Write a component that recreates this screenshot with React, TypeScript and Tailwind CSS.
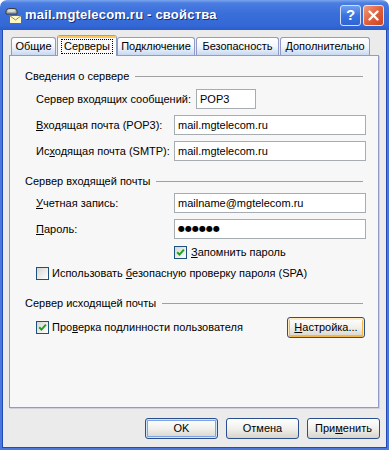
import React from 'react';

const Check = ({ checked = false }: { checked?: boolean }) => (
  <span className="flex h-[13px] w-[13px] shrink-0 items-center justify-center border border-[#1c5180] bg-linear-to-br from-[#d6d6d0] to-white">
    {checked && (
      <svg width="9" height="9" viewBox="0 0 9 9">
        <path d="M1.2 4.2 L3.5 6.6 L7.9 1.6" stroke="#21a121" strokeWidth="2" fill="none" />
      </svg>
    )}
  </span>
);

const Field = ({ children, className = '' }: { children: React.ReactNode; className?: string }) => (
  <div className={`flex h-[20px] items-center border border-[#a5acb2] bg-white px-[3px] ${className}`}>{children}</div>
);

const Group = ({ title, className = '' }: { title: string; className?: string }) => (
  <div className={`flex h-[14px] items-center ${className}`}>
    <span>{title}</span>
    <div className="ml-[6px] mr-[3px] h-px flex-1 bg-[#a0a0a0]" />
  </div>
);

const Btn = ({ children, kind = 'normal', className = '' }: { children: React.ReactNode; kind?: 'normal' | 'default' | 'hot'; className?: string }) => {
  const ring =
    kind === 'default'
      ? 'shadow-[inset_0_0_0_1px_#cee7ff,inset_0_0_0_2px_#7ea4e6]'
      : kind === 'hot'
        ? 'shadow-[inset_0_1px_0_1px_#ffeac0,inset_0_0_0_2px_#f3b64a]'
        : '';
  return (
    <div
      className={`flex h-[21px] items-center justify-center rounded-[3px] border border-[#2b4f8c] bg-linear-to-b from-white via-[#f1f0ec] to-[#d8d4cb] ${ring} ${className}`}
    >
      {children}
    </div>
  );
};

const U = ({ children }: { children: React.ReactNode }) => <span className="underline underline-offset-[1px]">{children}</span>;

const MailIcon = () => (
  <svg width="17" height="17" viewBox="0 0 17 17">
    <path d="M1 4 Q1 1.5 5 1.5 L9 1.5 Q12 1.5 12 4 L12 7 L1 7 Z" fill="#a8aca8" stroke="#3c3c3c" strokeWidth="1" />
    <ellipse cx="6.5" cy="3.5" rx="4" ry="1.6" fill="#d8dcd8" />
    <rect x="4.5" y="8.5" width="12" height="8" fill="#fff6c2" stroke="#6a6a5a" strokeWidth="1" />
    <path d="M4.5 8.5 L10.5 13 L16.5 8.5" fill="none" stroke="#8a8a70" strokeWidth="1" />
  </svg>
);

const tabClass =
  'flex h-[18px] items-center justify-center rounded-t-[3px] border border-b-0 border-[#919bc6] bg-linear-to-b from-white via-[#f3f6fb] to-[#c8d9f1]';

export default function App() {
  return (
    <div className="h-[450px] w-[389px] bg-white font-['Liberation_Sans',Arial,sans-serif] text-[11px] text-black">
      <div className="flex h-full flex-col overflow-hidden rounded-t-[7px]">
        {/* title bar */}
        <div className="flex h-[30px] shrink-0 items-center bg-[linear-gradient(to_bottom,#7aa5ee_0%,#4a7ee2_10%,#3a6ed9_45%,#3468d6_85%,#2b5ccd_100%)] pl-[5px] pr-[5px]">
          <MailIcon />
          <span className="ml-[3px] text-[13px] font-bold tracking-[0.2px] text-white [text-shadow:1px_1px_#14307e]">
            mail.mgtelecom.ru - свойства
          </span>
          <div className="ml-auto flex gap-[2px]">
            <div className="flex h-[21px] w-[21px] items-center justify-center rounded-[3px] border border-[#d4e0f6] bg-linear-to-b from-[#6f9ef0] via-[#3b74e2] to-[#2f64d6] text-[15px] font-bold text-white">
              ?
            </div>
            <div className="flex h-[21px] w-[21px] items-center justify-center rounded-[3px] border border-[#f2e2dc] bg-linear-to-br from-[#f09a7e] via-[#e0603c] to-[#c94522]">
              <svg width="11" height="11" viewBox="0 0 11 11">
                <path d="M1.5 1.5 L9.5 9.5 M9.5 1.5 L1.5 9.5" stroke="white" strokeWidth="2.4" strokeLinecap="round" />
              </svg>
            </div>
          </div>
        </div>

        {/* body */}
        <div className="flex flex-1 flex-col border-x-[2px] border-b-[2px] border-[#4a78dc]">
          <div className="flex flex-1 flex-col border-x border-b border-[#2249b4] bg-[#ebebeb] pt-[5px]">
            {/* tabs */}
            <div className="ml-[8px] flex h-[20px] items-end">
              <div className={`${tabClass} w-[45px]`}>Общие</div>
              <div className="relative z-10 -mb-px ml-[1px] flex h-[21px] w-[60px] flex-col overflow-hidden rounded-t-[3px] border border-t-0 border-b-0 border-[#919bc6] bg-[#f9f9f9]">
                <div className="h-[1px] bg-[#e0962f]" />
                <div className="h-[2px] bg-[#fcc85a]" />
                <div className="flex flex-1 items-start justify-center pt-[1px]">
                  <span className="border border-dotted border-black px-[2px] leading-[13px]">Серверы</span>
                </div>
              </div>
              <div className={`${tabClass} w-[78px]`}>Подключение</div>
              <div className={`${tabClass} ml-[1px] w-[83px]`}>Безопасность</div>
              <div className={`${tabClass} ml-[1px] w-[90px]`}>Дополнительно</div>
            </div>

            {/* panel */}
            <div className="ml-[6px] flex h-[353px] w-[370px] flex-col border border-[#919bc6] bg-[#f7f7f7] pl-[15px] pr-[12px] pt-[13px] shadow-[1px_1px_0_#d0d0dc]">
              <Group title="Сведения о сервере" />
              <div className="mt-[6px] flex h-[20px] items-center pl-[11px]">
                <span className="w-[160px]">Сервер входящих сообщений:</span>
                <Field className="w-[60px]">POP3</Field>
              </div>
              <div className="mt-[6px] flex h-[20px] items-center pl-[11px]">
                <span className="w-[138px]">
                  <U>В</U>ходящая почта (POP3):
                </span>
                <Field className="flex-1">mail.mgtelecom.ru</Field>
              </div>
              <div className="mt-[6px] flex h-[20px] items-center pl-[11px]">
                <span className="w-[138px]">
                  Ис<U>х</U>одящая почта (SMTP):
                </span>
                <Field className="flex-1">mail.mgtelecom.ru</Field>
              </div>

              <Group title="Сервер входящей почты" className="mt-[13px]" />
              <div className="mt-[5px] flex h-[20px] items-center pl-[11px]">
                <span className="w-[138px]">
                  <U>У</U>четная запись:
                </span>
                <Field className="flex-1">mailname@mgtelecom.ru</Field>
              </div>
              <div className="mt-[6px] flex h-[20px] items-center pl-[11px]">
                <span className="w-[138px]">
                  <U>П</U>ароль:
                </span>
                <Field className="flex-1">
                  <span className="font-['DejaVu_Sans',sans-serif] text-[8px]">●●●●●●</span>
                </Field>
              </div>
              <div className="mt-[7px] flex h-[13px] items-center gap-[4px] pl-[149px]">
                <Check checked />
                <span>
                  <U>З</U>апомнить пароль
                </span>
              </div>
              <div className="mt-[8px] flex h-[13px] items-center gap-[3px] pl-[11px]">
                <Check />
                <span>
                  Использовать <U>б</U>езопасную проверку пароля (SPA)
                </span>
              </div>

              <Group title="Сервер исходящей почты" className="mt-[16px]" />
              <div className="mt-[7px] flex h-[20px] items-center gap-[3px] pl-[11px]">
                <Check checked />
                <span>
                  Про<U>в</U>ерка подлинности пользователя
                </span>
                <Btn kind="hot" className="ml-auto mr-[1px] h-[20px] w-[78px]">
                  <span>
                    <U>Н</U>астройка...
                  </span>
                </Btn>
              </div>
            </div>

            {/* dialog buttons */}
            <div className="mt-[10px] flex justify-end gap-[8px] pr-[6px]">
              <Btn kind="default" className="w-[73px]">
                OK
              </Btn>
              <Btn className="w-[73px]">Отмена</Btn>
              <Btn className="w-[73px]">
                <span>
                  При<U>м</U>енить
                </span>
              </Btn>
            </div>
          </div>
        </div>
      </div>
    </div>
  );
}
